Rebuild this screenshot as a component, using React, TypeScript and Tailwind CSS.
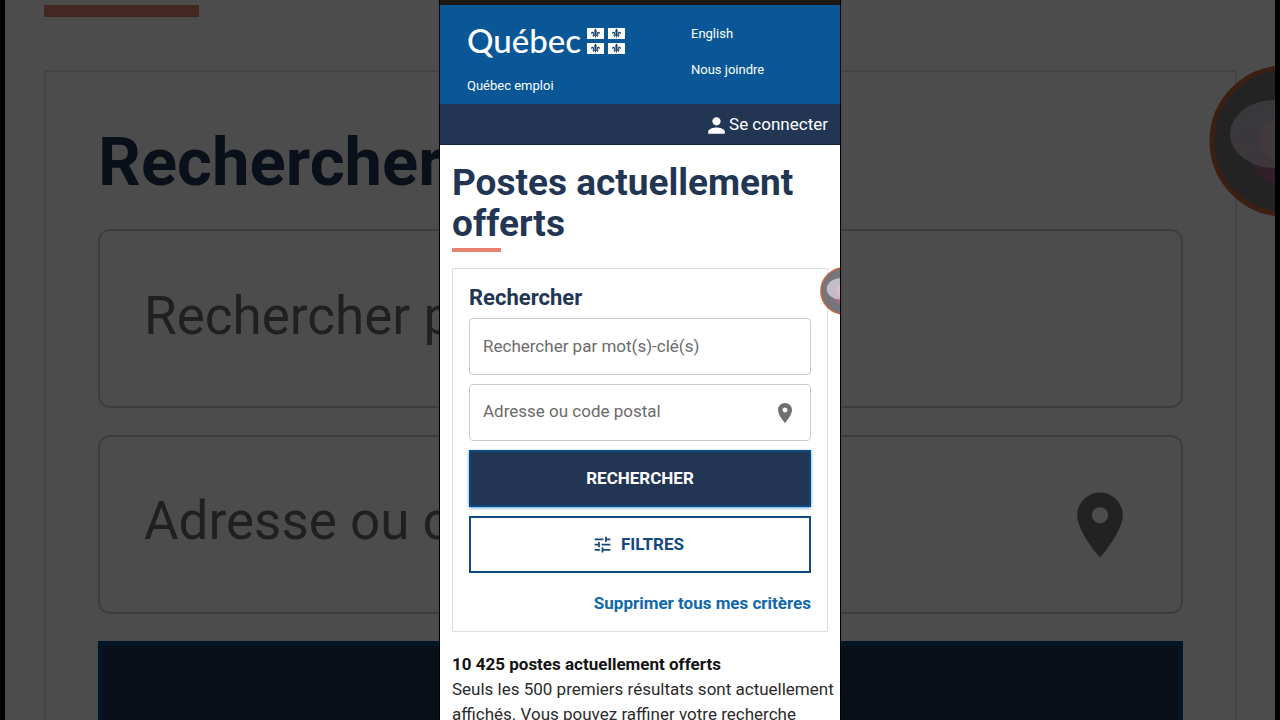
import { useId } from 'react'
import { MdPerson, MdPlace, MdTune } from 'react-icons/md'

function Flag({ x, y }: { x: number; y: number }) {
  return (
    <g transform={`translate(${x} ${y})`}>
      <rect width="17" height="11" fill="#fff" />
      <g fill="#16406b">
        <path d="M8.500 .6C9.700 2 10 3 9.500 4.300 9.200 5.300 9.100 6 9.100 7.200H7.900C7.900 6 7.800 5.300 7.500 4.300 7 3 7.300 2 8.500 .6z" />
        <path d="M9.400 6.800C9.400 4.800 10.400 3.600 11.600 3.700c1.300.1 1.700 1.600.8 2.600-.1-.9-.8-1.300-1.300-.9-.4.3-.4.8-.4 1.400z" />
        <path d="M7.600 6.800C7.600 4.800 6.600 3.600 5.400 3.700c-1.300.1-1.700 1.600-.8 2.600.1-.9.8-1.300 1.300-.9.4.3.4.8.4 1.400z" />
        <path d="M5.500 6.600h6v1.100h-6z" />
        <path d="M7.800 7.600h1.400l-.7 2.900zM6.300 7.600h1.200c-.1.900-.7 1.500-1.500 1.400zM10.700 7.600H9.500c.1.900.7 1.500 1.500 1.400z" />
      </g>
    </g>
  )
}

function QuebecLogo() {
  return (
    <a href="#accueil" className="flex items-start gap-1.5 text-white">
      <span className="font-['Lato',sans-serif] text-[33px] leading-8 font-medium">Québec</span>
      <svg className="mt-1 h-[26px] w-[38px]" viewBox="0 0 38 26" aria-hidden="true">
        <Flag x={0} y={0} />
        <Flag x={21} y={0} />
        <Flag x={0} y={15} />
        <Flag x={21} y={15} />
      </svg>
    </a>
  )
}

function Bubble({ className }: { className: string }) {
  const id = useId()
  return (
    <svg className={className} viewBox="0 0 152 152" aria-hidden="true">
      <defs>
        <linearGradient id={id} x1="0" y1="0" x2="0.6" y2="1">
          <stop offset="0" stopColor="#b9c2c8" />
          <stop offset="1" stopColor="#d0b3c6" />
        </linearGradient>
      </defs>
      <circle cx="76" cy="76" r="73" fill="#747679" stroke="#c4683c" strokeWidth="5" />
      <circle cx="76" cy="88" r="34" fill="#a8668a" />
      <ellipse cx="66" cy="69" rx="45" ry="34" fill={`url(#${id})`} />
      <circle cx="72" cy="74" r="22" fill="#e3c2d2" opacity="0.6" />
    </svg>
  )
}

// Enlarged, dimmed copy of the search card that fills the space behind the phone view
function Backdrop() {
  return (
    <div
      inert
      className="col-start-1 row-start-1 h-screen overflow-hidden border-x-[5px] border-black bg-white pr-[38px] pl-[39px] brightness-30"
    >
      <div className="mt-[5px] h-3 w-[155px] bg-[#e58271]" />
      <div className="relative mt-[53px] border-2 border-[#dcdfe1] px-[52px] pt-[50px]">
        <p className="text-[67px] leading-[80px] font-bold text-[#223654]">Rechercher</p>
        <div className="mt-[27px] flex flex-col gap-[27px]">
          <input
            type="text"
            aria-label="Rechercher par mot(s)-clé(s)"
            placeholder="Rechercher par mot(s)-clé(s)"
            className="h-[179px] rounded-xl border-2 border-[#c5cad2] px-11 pb-1.5 text-[53px] placeholder:text-[#6b6b6b]"
          />
          <div className="flex h-[179px] items-center rounded-xl border-2 border-[#c5cad2] pr-[42px] pl-11">
            <input
              type="text"
              aria-label="Adresse ou code postal"
              placeholder="Adresse ou code postal"
              className="min-w-0 flex-1 pb-1.5 text-[53px] placeholder:text-[#6b6b6b]"
            />
            <MdPlace className="size-[78px] text-[#707070]" />
          </div>
          <button type="button" className="h-[179px] border-[5px] border-[#0b4a80] bg-[#223654]" aria-label="Rechercher" />
        </div>
      </div>
      <Bubble className="absolute top-[65px] -right-[86px] size-[152px]" />
    </div>
  )
}

function Header() {
  return (
    <header>
      <div className="h-[5px] bg-[#1c180f]" />
      <div className="flex h-[99px] bg-[#095797] px-[27px] text-[13px] leading-5 text-white">
        <div className="w-56 shrink-0 pt-[19px]">
          <QuebecLogo />
          <a href="#emploi" className="mt-5 block">
            Québec emploi
          </a>
        </div>
        <nav className="flex flex-col gap-4 pt-[19px]">
          <a href="#english">English</a>
          <a href="#joindre">Nous joindre</a>
        </nav>
      </div>
      <div className="flex h-[41px] items-center justify-end border-b border-[#14233b] bg-[#223654] px-3">
        <a href="#connexion" className="flex items-center text-white">
          <MdPerson className="mt-0.5 size-[25px]" />
          <span className="text-[17px] leading-6">Se connecter</span>
        </a>
      </div>
    </header>
  )
}

function SearchForm() {
  return (
    <form className="mt-4 border border-[#dcdfe1] px-4 py-4">
      <h2 className="text-[22px] leading-[25px] font-bold text-[#223654]">Rechercher</h2>
      <div className="mt-2 flex flex-col gap-[9px]">
        <input
          type="text"
          aria-label="Rechercher par mot(s)-clé(s)"
          placeholder="Rechercher par mot(s)-clé(s)"
          className="h-[57px] rounded border border-[#c5cad2] px-[13px] pb-0.5 text-[17px] placeholder:text-[#6b6b6b]"
        />
        <div className="flex h-[57px] items-center rounded border border-[#c5cad2] px-[13px]">
          <input
            type="text"
            aria-label="Adresse ou code postal"
            placeholder="Adresse ou code postal"
            className="min-w-0 flex-1 pb-0.5 text-[17px] placeholder:text-[#6b6b6b]"
          />
          <MdPlace className="size-6 text-[#707070]" />
        </div>
        <button
          type="submit"
          className="h-[57px] border-2 border-[#0b4a80] bg-[#223654] text-[17px] font-bold text-white shadow-[0_1px_3px_#5b9bd0]"
        >
          RECHERCHER
        </button>
        <button
          type="button"
          className="flex h-[57px] items-center justify-center gap-2 border-2 border-[#0f4a80] bg-white pr-1 text-[17px] font-bold text-[#12497f]"
        >
          <MdTune className="size-[21px]" />
          FILTRES
        </button>
      </div>
      <a href="#supprimer" className="mt-[18px] block text-right text-[17px] leading-6 font-bold text-[#1068aa]">
        Supprimer tous mes critères
      </a>
    </form>
  )
}

export default function App() {
  return (
    <div className="grid h-screen overflow-hidden bg-black font-['Roboto',sans-serif]">
      <Backdrop />
      <div className="relative z-10 col-start-1 row-start-1 mx-auto h-screen w-full max-w-[402px] overflow-hidden border-x border-black bg-white">
        <Header />
        <main className="px-3 pt-[17px]">
          <h1 className="text-[37px] leading-[41px] font-bold text-[#223654]">Postes actuellement offerts</h1>
          <div className="mt-1 h-1 w-[49px] bg-[#e58271]" />
          <SearchForm />
          <p className="mt-5 text-[17px] leading-[25px] font-bold text-[#141414]">10 425 postes actuellement offerts</p>
          <p className="-mr-2 text-[17px] leading-[25px] text-[#2b2b2b]">
            Seuls les 500 premiers résultats sont actuellement affichés. Vous pouvez raffiner votre recherche
          </p>
        </main>
        <Bubble className="absolute top-[267px] -right-7 size-12" />
      </div>
    </div>
  )
}
